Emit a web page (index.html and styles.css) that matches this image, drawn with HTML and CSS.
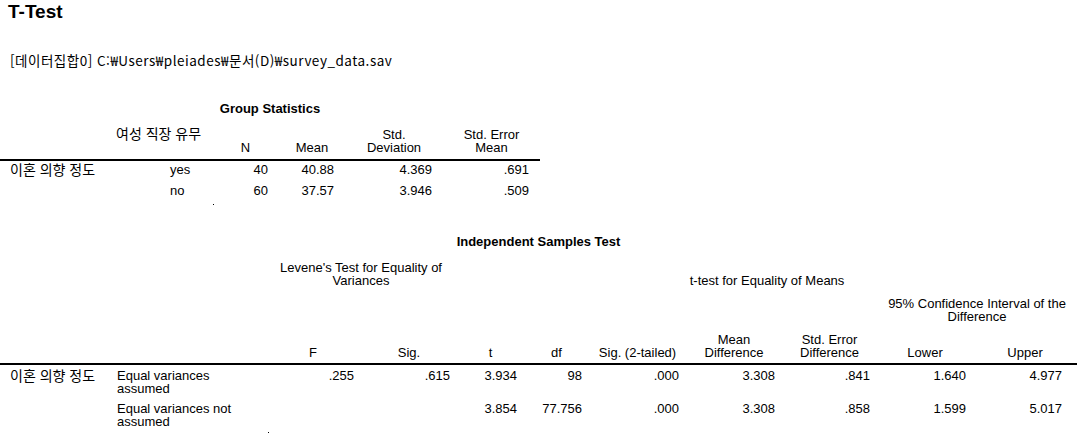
FILE: index.html
```html
<!DOCTYPE html>
<html lang="ko">
<head>
<meta charset="utf-8">
<title>T-Test</title>
<link rel="stylesheet" href="styles.css">
</head>
<body>
<h1 class="page-title">T-Test</h1>
<p class="path">[데이터집합0] C:₩Users₩pleiades₩문서(D)₩survey_data.sav</p>

<section class="block gs-block">
  <div class="tbl-title">Group Statistics</div>
  <table class="tbl gs">
    <colgroup>
      <col class="w112"><col class="w100"><col class="w67"><col class="w66"><col class="w98"><col class="w97">
    </colgroup>
    <thead>
      <tr class="gs-head">
        <th></th>
        <th class="corner ko">여성 직장 유무</th>
        <th>N</th>
        <th>Mean</th>
        <th>Std.<br>Deviation</th>
        <th>Std. Error<br>Mean</th>
      </tr>
    </thead>
    <tbody>
      <tr class="gs-row">
        <td class="lbl ko">이혼 의향 정도</td>
        <td class="cat">yes</td>
        <td class="num">40</td>
        <td class="num">40.88</td>
        <td class="num">4.369</td>
        <td class="num">.691</td>
      </tr>
      <tr class="gs-row">
        <td></td>
        <td class="cat">no</td>
        <td class="num">60</td>
        <td class="num">37.57</td>
        <td class="num">3.946</td>
        <td class="num">.509</td>
      </tr>
    </tbody>
  </table>
  <div class="dot dot-gs"></div>
</section>

<section class="block ist-block">
  <div class="tbl-title">Independent Samples Test</div>
  <table class="tbl ist">
    <colgroup>
      <col class="w112"><col class="w153"><col class="w96"><col class="w96"><col class="w67"><col class="w65"><col class="w97"><col class="w96"><col class="w95"><col class="w96"><col class="w104">
    </colgroup>
    <thead>
      <tr class="ih1">
        <th colspan="2" rowspan="3"></th>
        <th colspan="2" class="grp">Levene's Test for Equality of<br>Variances</th>
        <th colspan="7" class="grp">t-test for Equality of Means</th>
      </tr>
      <tr class="ih2">
        <th rowspan="2">F</th>
        <th rowspan="2">Sig.</th>
        <th rowspan="2">t</th>
        <th rowspan="2">df</th>
        <th rowspan="2">Sig. (2-tailed)</th>
        <th rowspan="2">Mean<br>Difference</th>
        <th rowspan="2">Std. Error<br>Difference</th>
        <th colspan="2" class="grp">95% Confidence Interval of the<br>Difference</th>
      </tr>
      <tr class="ih3">
        <th>Lower</th>
        <th>Upper</th>
      </tr>
    </thead>
    <tbody>
      <tr class="ist-row">
        <td class="lbl ko">이혼 의향 정도</td>
        <td class="sub">Equal variances<br>assumed</td>
        <td class="num">.255</td>
        <td class="num">.615</td>
        <td class="num">3.934</td>
        <td class="num">98</td>
        <td class="num">.000</td>
        <td class="num">3.308</td>
        <td class="num">.841</td>
        <td class="num">1.640</td>
        <td class="num last">4.977</td>
      </tr>
      <tr class="ist-row">
        <td></td>
        <td class="sub">Equal variances not<br>assumed</td>
        <td class="num"></td>
        <td class="num"></td>
        <td class="num">3.854</td>
        <td class="num">77.756</td>
        <td class="num">.000</td>
        <td class="num">3.308</td>
        <td class="num">.858</td>
        <td class="num">1.599</td>
        <td class="num last">5.017</td>
      </tr>
    </tbody>
  </table>
  <div class="dot dot-ist"></div>
</section>
</body>
</html>
```
FILE: styles.css
```css
html, body {
  margin: 0;
  padding: 0;
  background: #fff;
  color: #000;
}

body {
  width: 1077px;
  height: 439px;
  overflow: hidden;
  font-family: "Liberation Sans", Arial, sans-serif;
  font-size: 13px;
  line-height: 13px;
}

.ko {
  font-family: "Noto Sans CJK KR", "Liberation Sans", sans-serif;
  font-size: 14px;
}

.page-title {
  margin: 0;
  padding: 1px 0 0 8px;
  font-size: 19px;
  line-height: 22px;
  font-weight: bold;
}

.path {
  margin: 29px 0 0 10px;
  font-family: "Noto Sans CJK KR", "Liberation Mono", monospace;
  font-size: 13.5px;
  line-height: 16px;
  letter-spacing: 0.5px;
}

.gs-block {
  margin-top: 34px;
  width: 540px;
}

.ist-block {
  margin-top: 30px;
  width: 1077px;
}

.tbl-title {
  text-align: center;
  font-weight: bold;
  line-height: 13px;
  margin-bottom: 12px;
}

.ist-block .tbl-title {
  margin-bottom: 2px;
}

.tbl {
  border-collapse: collapse;
  table-layout: fixed;
  border-spacing: 0;
}

.gs { width: 540px; }
.ist { width: 1077px; }

.w112 { width: 112px; }
.w100 { width: 100px; }
.w67 { width: 67px; }
.w66 { width: 66px; }
.w98 { width: 98px; }
.w97 { width: 97px; }
.w153 { width: 153px; }
.w96 { width: 96px; }
.w65 { width: 65px; }
.w95 { width: 95px; }
.w104 { width: 104px; }

.tbl th {
  font-weight: normal;
  text-align: center;
  vertical-align: bottom;
  padding: 0 2px 5px;
  white-space: nowrap;
}

.tbl td {
  padding: 0;
  white-space: nowrap;
}

.tbl tbody tr:first-child td {
  border-top: 2px solid #000;
}

/* Group statistics */
.gs-head { height: 33px; }

.gs .corner {
  text-align: left;
  vertical-align: top;
  padding: 0 0 0 4px;
  line-height: 13px;
}

.gs-row { height: 22px; }

.gs-row td {
  vertical-align: top;
  padding-top: 2px;
}

.gs .lbl { padding-left: 10px; }
.gs .cat { padding-left: 58px; }
.gs .num {
  text-align: right;
  padding-right: 11px;
}

/* Independent samples */
.ih1 { height: 40px; }
.ih2 { height: 36px; }
.ih3 { height: 38px; }

.ist th.grp { padding-bottom: 3px; }
.ist .ih2 th,
.ist .ih3 th { padding-bottom: 4px; }
.ist .ih2 th.grp { padding-bottom: 3px; }

.ist-row { height: 34px; }

.ist-row td {
  vertical-align: top;
  padding-top: 4px;
}

.ist .lbl { padding-left: 10px; }
.ist .sub { padding-left: 5px; }
.ist .num {
  text-align: right;
  padding-right: 7px;
}
.ist .num.last { padding-right: 15px; }

.dot {
  width: 1px;
  height: 1px;
  background: #000;
}

.dot-gs { margin-left: 213px; }
.dot-ist { margin-left: 268px; }
```
